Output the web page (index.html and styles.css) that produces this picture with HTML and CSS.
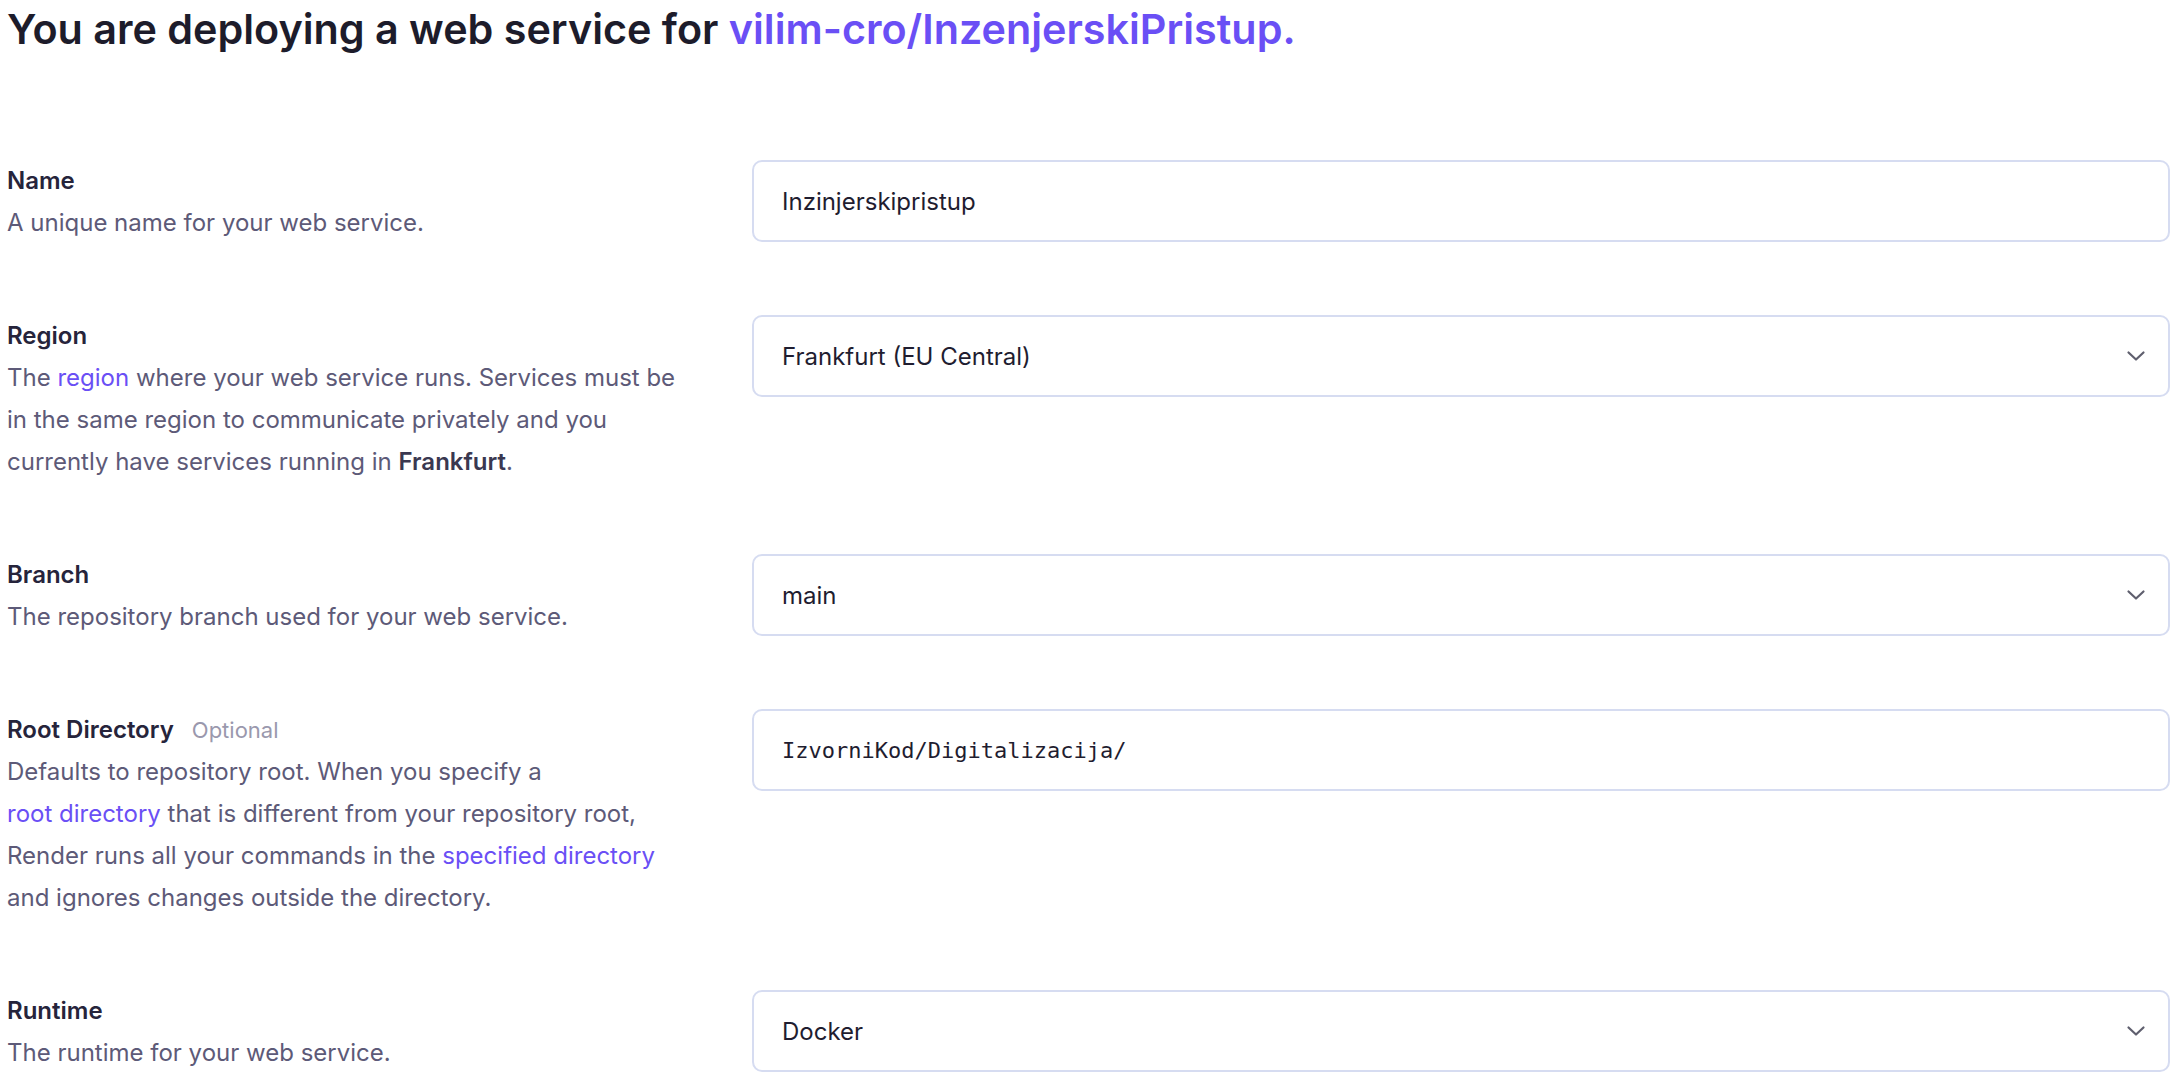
FILE: index.html
```html
<!DOCTYPE html>
<html lang="en">
<head>
<meta charset="utf-8">
<title>Deploy web service</title>
<link rel="stylesheet" href="styles.css">
</head>
<body>
<h1 class="title">You are deploying a web service for <span class="repo">vilim-cro/InzenjerskiPristup.</span></h1>

<form class="form">
  <div class="row">
    <div class="info">
      <div class="label">Name</div>
      <p class="desc">A unique name for your web service.</p>
    </div>
    <div class="field"><span class="value">Inzinjerskipristup</span></div>
  </div>

  <div class="row">
    <div class="info">
      <div class="label">Region</div>
      <p class="desc">The <a class="link">region</a> where your web service runs. Services must be<br>in the same region to communicate privately and you<br>currently have services running in <b class="strong">Frankfurt</b>.</p>
    </div>
    <div class="field select"><span class="value">Frankfurt (EU Central)</span>
      <svg class="chev" viewBox="0 0 20 12" width="20" height="12"><path d="M2.5 2.5l7.5 7 7.5-7" fill="none" stroke="#5f5f6e" stroke-width="2.2" stroke-linecap="round" stroke-linejoin="round"/></svg>
    </div>
  </div>

  <div class="row">
    <div class="info">
      <div class="label">Branch</div>
      <p class="desc">The repository branch used for your web service.</p>
    </div>
    <div class="field select"><span class="value">main</span>
      <svg class="chev" viewBox="0 0 20 12" width="20" height="12"><path d="M2.5 2.5l7.5 7 7.5-7" fill="none" stroke="#5f5f6e" stroke-width="2.2" stroke-linecap="round" stroke-linejoin="round"/></svg>
    </div>
  </div>

  <div class="row">
    <div class="info">
      <div class="label">Root Directory <span class="optional">Optional</span></div>
      <p class="desc">Defaults to repository root. When you specify a<br><a class="link">root directory</a> that is different from your repository root,<br>Render runs all your commands in the <a class="link">specified directory</a><br>and ignores changes outside the directory.</p>
    </div>
    <div class="field"><span class="value mono">IzvorniKod/Digitalizacija/</span></div>
  </div>

  <div class="row">
    <div class="info">
      <div class="label">Runtime</div>
      <p class="desc">The runtime for your web service.</p>
    </div>
    <div class="field select"><span class="value">Docker</span>
      <svg class="chev" viewBox="0 0 20 12" width="20" height="12"><path d="M2.5 2.5l7.5 7 7.5-7" fill="none" stroke="#5f5f6e" stroke-width="2.2" stroke-linecap="round" stroke-linejoin="round"/></svg>
    </div>
  </div>
</form>
</body>
</html>
```

FILE: styles.css
```css
html, body {
  background: #ffffff;
}
body {
  margin: 0;
  padding: 0 12px 0 7px;
  font-family: Inter, "Noto Sans", sans-serif;
  color: #1f1d33;
  overflow: hidden;
}
.title {
  margin: 0;
  padding-top: 5px;
  font-size: 41.3px;
  line-height: 48px;
  font-weight: 600;
  color: #1d1c2b;
  letter-spacing: 0;
}
.repo {
  color: #6a4ff5;
}
.form {
  margin-top: 107px;
  display: flex;
  flex-direction: column;
  gap: 71px;
}
.row {
  display: grid;
  grid-template-columns: 710px 1fr;
  column-gap: 35px;
  align-items: start;
}
.label {
  font-size: 24px;
  line-height: 42px;
  font-weight: 600;
  color: #26243b;
}
.optional {
  font-size: 22px;
  font-weight: 400;
  color: #9a98ad;
  margin-left: 12px;
}
.desc {
  margin: 0;
  font-size: 24px;
  line-height: 42px;
  color: #5d5a78;
}
.link {
  color: #6a4ff5;
}
.strong {
  font-weight: 600;
  color: #3a3850;
}
.field {
  height: 82px;
  box-sizing: border-box;
  border: 2px solid #d6dcf1;
  border-radius: 10px;
  display: flex;
  align-items: center;
  padding: 0 22px 0 28px;
  font-size: 24px;
  color: #1f1d30;
}
.select {
  justify-content: space-between;
}
.value.mono {
  font-family: "DejaVu Sans Mono", monospace;
  font-size: 22px;
}
.chev {
  display: block;
}
```
